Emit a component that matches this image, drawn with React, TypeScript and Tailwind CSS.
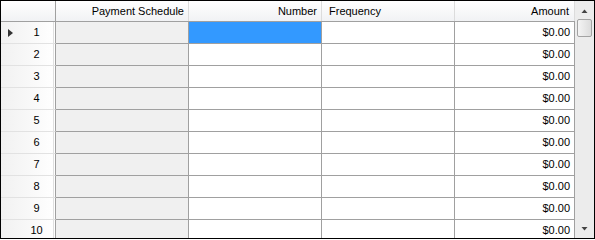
const rows = Array.from({ length: 10 }, (_, i) => i + 1)

function RowArrow() {
  return (
    <svg width="5" height="8" viewBox="0 0 5 8" className="block">
      <polygon points="0,0 5,4 0,8" fill="#333" />
    </svg>
  )
}

function ScrollArrow({ up }: { up?: boolean }) {
  return (
    <svg width="7" height="4" viewBox="0 0 7 4" className="block">
      <polygon points={up ? '0.5,4 3.5,0.5 6.5,4' : '0.5,0 3.5,3.5 6.5,0'} fill="#444" />
    </svg>
  )
}

export default function App() {
  return (
    <div className="flex h-[239px] w-[595px] overflow-hidden border border-black bg-white font-['Liberation_Sans',Arial,sans-serif] text-[11px] text-black">
      <div className="flex w-[574px] flex-col">
        {/* column headers */}
        <div className="flex h-[21px] shrink-0 border-b border-[#a0a0a0] bg-gradient-to-b from-white to-[#f1f2f4]">
          <div className="w-[55px] border-r border-[#a0a0a0]" />
          <div className="flex w-[133px] items-center justify-end border-r border-[#dcdcdc] pr-[4px]">
            Payment Schedule
          </div>
          <div className="flex w-[133px] items-center justify-end border-r border-[#dcdcdc] pr-[4px]">
            Number
          </div>
          <div className="flex w-[133px] items-center border-r border-[#dcdcdc] pl-[7px]">
            Frequency
          </div>
          <div className="flex w-[120px] items-center justify-end border-r border-[#dcdcdc] pr-[5px]">
            Amount
          </div>
        </div>

        {rows.map((n) => (
          <div key={n} className="flex h-[22px] shrink-0">
            <div className="flex w-[55px] items-center border-r border-b border-r-[#a0a0a0] border-b-[#e2e2e2] bg-gradient-to-r from-[#f1f1f1] to-white shadow-[inset_-1px_0_0_white,inset_-2px_0_0_#e0e0e0]">
              <div className="flex w-[17px] justify-end pr-[5px]">{n === 1 && <RowArrow />}</div>
              <div className="flex-1 text-center">{n}</div>
            </div>
            <div className="w-[133px] border-r border-b border-[#a0a0a0] bg-[#f0f0f0]" />
            <div
              className={`w-[133px] border-r border-b border-[#a0a0a0] ${n === 1 ? 'bg-[#3399ff]' : 'bg-white'}`}
            />
            <div className="w-[133px] border-r border-b border-[#a0a0a0] bg-white" />
            <div className="flex w-[120px] items-center justify-end border-r border-b border-[#a0a0a0] bg-white pr-[4px]">
              $0.00
            </div>
          </div>
        ))}
      </div>

      {/* vertical scrollbar */}
      <div className="flex w-[19px] flex-col bg-[#ececec]">
        <div className="flex h-[17px] shrink-0 items-center justify-center pt-[2px]">
          <ScrollArrow up />
        </div>
        <div className="mx-[2px] mt-[1px] h-[18px] shrink-0 rounded-[2px] border border-[#a3a3a3] bg-gradient-to-r from-[#f4f4f4] to-[#dcdcdc]" />
        <div className="flex-1" />
        <div className="flex h-[17px] shrink-0 items-center justify-center pb-[2px]">
          <ScrollArrow />
        </div>
      </div>
    </div>
  )
}
